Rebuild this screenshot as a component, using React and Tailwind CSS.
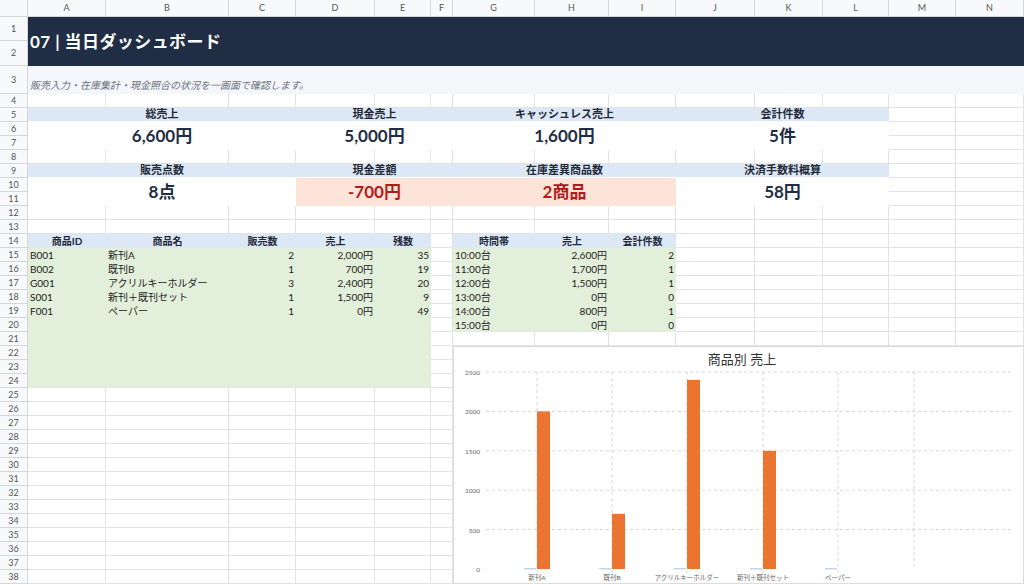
import React from "react";

const COLS = ["A","B","C","D","E","F","G","H","I","J","K","L","M","N"];
const font = { fontFamily: "Lato, 'Noto Sans CJK JP', sans-serif" };

function Cell({ r, c, rs = 1, cs = 1, className = "", children }) {
  return (
    <div className={className} style={{ gridRow: `${r + 1} / span ${rs}`, gridColumn: `${c + 2} / span ${cs}` }}>
      {children}
    </div>
  );
}

const products = [
  ["B001", "新刊A", 2, "2,000円", 35],
  ["B002", "既刊B", 1, "700円", 19],
  ["G001", "アクリルキーホルダー", 3, "2,400円", 20],
  ["S001", "新刊＋既刊セット", 1, "1,500円", 9],
  ["F001", "ペーパー", 1, "0円", 49],
];
const hours = [
  ["10:00台", "2,600円", 2],
  ["11:00台", "1,700円", 1],
  ["12:00台", "1,500円", 1],
  ["13:00台", "0円", 0],
  ["14:00台", "800円", 1],
  ["15:00台", "0円", 0],
];

function Kpi({ r, c, cs, label, value, warn }) {
  return (
    <>
      <Cell r={r} c={c} cs={cs} className="bg-[#dce8f5] flex items-center justify-center text-[11px] font-bold text-[#1f2937] border-b border-white">{label}</Cell>
      <Cell r={r + 1} c={c} cs={cs} rs={2} className={`flex items-center justify-center text-[17px] font-bold ${warn ? "bg-[#fde4d9] text-[#b31b1b]" : "bg-white text-[#1f2d45]"}`}>{value}</Cell>
    </>
  );
}

function Chart() {
  const data = [["新刊A", 2000], ["既刊B", 700], ["アクリルキーホルダー", 2400], ["新刊＋既刊セット", 1500], ["ペーパー", 0]];
  const y0 = 222, yTop = 25; // relative to chart box (top 346)
  const sy = (v) => y0 - (v / 2500) * (y0 - yTop);
  const xs = [83, 158, 233, 309, 384, 460];
  return (
    <div className="absolute left-[453px] top-[346px] w-[571px] h-[238px] bg-white border border-[#dcdcdc]">
      <svg width="571" height="238" style={font}>
        <text x="288" y="17" textAnchor="middle" fontSize="13" fill="#333">商品別 売上</text>
        {[0, 500, 1000, 1500, 2000, 2500].map((v) => (
          <g key={v}>
            <text x="26" y={sy(v) + 3} textAnchor="end" fontSize="6.5" fill="#666">{v}</text>
            {v > 0 && <line x1="32" x2="560" y1={sy(v)} y2={sy(v)} stroke="#ccc" strokeDasharray="3 3" strokeWidth="0.8" />}
          </g>
        ))}
        {xs.map((x) => (
          <line key={x} x1={x} x2={x} y1={yTop} y2={y0 + (x === 460 ? 0 : 8)} stroke="#ccc" strokeDasharray="3 3" strokeWidth="0.8" />
        ))}
        {data.map(([n, v], i) => (
          <g key={n}>
            <rect x={xs[i] - 13} y={y0 - 1} width="12" height="1.5" fill="#c5d5e8" />
            {v > 0 && <rect x={xs[i]} y={sy(v)} width="13" height={y0 - sy(v)} fill="#eb7431" />}
            <text x={xs[i]} y={y0 + 11} textAnchor="middle" fontSize="6.5" fill="#666">{n}</text>
          </g>
        ))}
      </svg>
    </div>
  );
}

export default function App() {
  const cells = [];
  for (let r = 1; r <= 38; r++)
    for (let c = 0; c < 14; c++)
      cells.push(<Cell key={`${r}-${c}`} r={r} c={c} className="border-r border-b border-[#e2e3e3] bg-white" />);

  return (
    <div className="relative w-[1024px] h-[584px] overflow-hidden bg-white" style={font}>
      <div className="grid grid-cols-[28px_78px_123px_67px_79px_56px_22px_82px_74px_67px_79px_68px_66px_67px_68px] grid-rows-[17px_24px_25px_28px_repeat(35,14px)]">
        <div className="bg-[#f8f9fa] border-r border-b border-[#d5d6d7]" style={{ gridRow: "1", gridColumn: "1" }} />
        {COLS.map((l, i) => (
          <div key={l} className="bg-[#f8f9fa] border-r border-b border-[#d5d6d7] text-[9px] text-[#555] flex items-center justify-center" style={{ gridRow: "1", gridColumn: `${i + 2}` }}>{l}</div>
        ))}
        {Array.from({ length: 38 }, (_, i) => (
          <div key={i} className="bg-[#f8f9fa] border-r border-b border-[#d5d6d7] text-[9px] text-[#555] flex items-center justify-center" style={{ gridRow: `${i + 2}`, gridColumn: "1" }}>{i + 1}</div>
        ))}
        {cells}

        <Cell r={1} c={0} rs={2} cs={14} className="bg-[#1f2d45] flex items-center pl-[2px] text-white text-[17px] font-bold tracking-wide">07 | 当日ダッシュボード</Cell>
        <Cell r={3} c={0} cs={14} className="bg-[#f4f6fa] flex items-end pl-[2px] pb-[1px] text-[10px] italic text-[#6b7280]">販売入力・在庫集計・現金照合の状況を一画面で確認します。</Cell>

        <Kpi r={5} c={0} cs={3} label="総売上" value="6,600円" />
        <Kpi r={5} c={3} cs={3} label="現金売上" value="5,000円" />
        <Kpi r={5} c={6} cs={3} label="キャッシュレス売上" value="1,600円" />
        <Kpi r={5} c={9} cs={3} label="会計件数" value="5件" />
        <Kpi r={9} c={0} cs={3} label="販売点数" value="8点" />
        <Kpi r={9} c={3} cs={3} label="現金差額" value="-700円" warn />
        <Kpi r={9} c={6} cs={3} label="在庫差異商品数" value="2商品" warn />
        <Kpi r={9} c={9} cs={3} label="決済手数料概算" value="58円" />

        <Cell r={14} c={0} cs={5} className="bg-[#dce8f5]" />
        <Cell r={15} c={0} rs={10} cs={5} className="bg-[#e2efda]" />
        {["商品ID", "商品名", "販売数", "売上", "残数"].map((h, i) => (
          <Cell key={h} r={14} c={i} className="flex items-center justify-center text-[10px] font-bold text-[#1f2937]">{h}</Cell>
        ))}
        {products.map((p, ri) =>
          p.map((v, ci) => (
            <Cell key={`${ri}-${ci}`} r={15 + ri} c={ci} className={`flex items-center px-[2px] text-[10px] text-[#222] leading-none ${ci >= 2 ? "justify-end" : ""}`}>{v}</Cell>
          ))
        )}

        <Cell r={14} c={6} cs={3} className="bg-[#dce8f5]" />
        <Cell r={15} c={6} rs={6} cs={3} className="bg-[#e2efda]" />
        {["時間帯", "売上", "会計件数"].map((h, i) => (
          <Cell key={h} r={14} c={6 + i} className="flex items-center justify-center text-[10px] font-bold text-[#1f2937]">{h}</Cell>
        ))}
        {hours.map((p, ri) =>
          p.map((v, ci) => (
            <Cell key={`h${ri}-${ci}`} r={15 + ri} c={6 + ci} className={`flex items-center px-[2px] text-[10px] text-[#222] leading-none ${ci >= 1 ? "justify-end" : ""}`}>{v}</Cell>
          ))
        )}
      </div>
      <Chart />
    </div>
  );
}
